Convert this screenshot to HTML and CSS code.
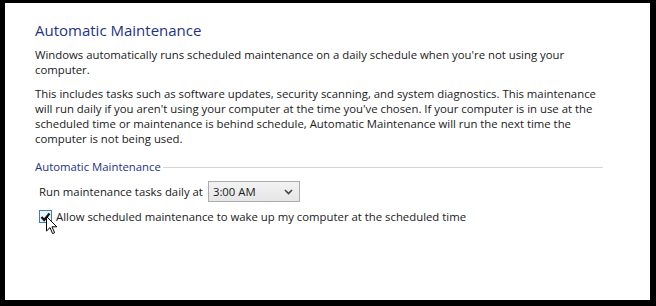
FILE: index.html
```html
<!DOCTYPE html>
<html lang="en">
<head>
<meta charset="UTF-8" />
<title>Automatic Maintenance</title>
<link rel="stylesheet" href="styles.css">
</head>
<body>

<div class="panel">
  <h1 class="title">Automatic Maintenance</h1>
  <p>Windows automatically runs scheduled maintenance on a daily schedule when you're not using your computer.</p>
  <p>This includes tasks such as software updates, security scanning, and system diagnostics. This maintenance will run daily if you aren't using your computer at the time you've chosen. If your computer is in use at the scheduled time or maintenance is behind schedule, Automatic Maintenance will run the next time the computer is not being used.</p>

  <div class="group">
    <div class="group-head"><span>Automatic Maintenance</span></div>

    <div class="field">
      <label for="time">Run maintenance tasks daily at</label>
      <div class="select" id="time">
        <span>3:00 AM</span>
        <svg width="9" height="6" viewBox="0 0 9 6"><path d="M1 1 L4.5 4.5 L8 1" fill="none" stroke="#444" stroke-width="1.6"/></svg>
      </div>
    </div>

    <div class="check-row">
      <span class="check">
        <svg width="11" height="10" viewBox="0 0 11 10"><path d="M1.5 5 L4.2 8 L9.5 1.5" fill="none" stroke="#111" stroke-width="2.2"/></svg>
        <!-- mouse pointer sitting over the box -->
        <svg class="cursor" width="12" height="19" viewBox="0 0 12 19"><path d="M0.5 0.5 L0.5 15 L4 11.6 L6.6 17.6 L8.6 16.7 L6 10.8 L10.8 10.8 Z" fill="#fff" stroke="#000" stroke-width="1"/></svg>
      </span>
      <span>Allow scheduled maintenance to wake up my computer at the scheduled time</span>
    </div>
  </div>
</div>

</body>
</html>
```

FILE: styles.css
```css
body {
  margin: 0;
  height: 306px;
  background: #000;
  padding: 3px 6px 6px 5px;
  box-sizing: border-box;
  font-family: 'Open Sans', 'Noto Sans', sans-serif;
  font-size: 11.35px;
  color: #1a1a1a;
}

.panel {
  background: #fff;
  height: 100%;
  padding: 16px 42px 0 30px;
  box-sizing: border-box;
}

.title {
  margin: 0 0 6px;
  font-size: 15px;
  font-weight: 400;
  color: #1e3287;
  line-height: 22px;
}

p {
  margin: 0 0 9px;
  line-height: 15px;
}

.group {
  margin: 13px 5px 0 0;
}

.group-head {
  display: flex;
  align-items: center;
  gap: 2px;
  color: #1e3287;
  line-height: 16px;
}

.group-head::after {
  content: '';
  flex: 1;
  border-top: 1px solid #d5d5d5;
}

.field {
  display: flex;
  align-items: center;
  gap: 5px;
  margin: 6px 0 0 4px;
}

.select {
  width: 92px;
  height: 21px;
  box-sizing: border-box;
  border: 1px solid #acacac;
  background: linear-gradient(#f2f2f2, #e6e6e6);
  display: flex;
  align-items: center;
  justify-content: space-between;
  padding: 0 6px 0 4px;
}

.check-row {
  display: flex;
  align-items: center;
  gap: 4px;
  margin: 7px 0 0 4px;
}

.check {
  position: relative;
  width: 13px;
  height: 13px;
  box-sizing: border-box;
  border: 1px solid #3c7fb1;
  background: #e8f2fc;
  display: flex;
  align-items: center;
  justify-content: center;
}

.cursor {
  position: absolute;
  left: 6px;
  top: 5px;
}
```
